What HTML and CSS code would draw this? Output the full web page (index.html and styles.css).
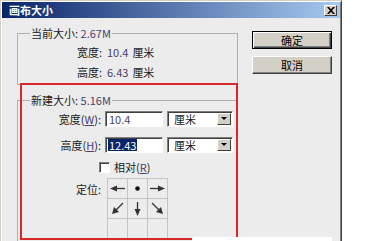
FILE: index.html
```html
<!DOCTYPE html>
<html lang="zh">
<head>
  <meta charset="UTF-8">
  <title>画布大小</title>
  <link rel="stylesheet" href="styles.css">
</head>
<body>
<div class="dialog">
  <div class="titlebar">
    <span class="title">画布大小</span>
    <span class="close">
      <svg width="8" height="7" viewBox="0 0 8 7"><path d="M0 0h2l2 2.2L6 0h2L5 3.5 8 7H6L4 4.8 2 7H0l3-3.5z" fill="#000"/></svg>
    </span>
  </div>
  <div class="content">
    <div class="main">
      <fieldset class="group current">
        <legend>当前大小: <span class="num">2.67M</span></legend>
        <div class="info-row"><span class="lbl">宽度:</span><span class="num">10.4</span><span>厘米</span></div>
        <div class="info-row"><span class="lbl">高度:</span><span class="num">6.43</span><span>厘米</span></div>
      </fieldset>
      <fieldset class="group newsize">
        <legend>新建大小: <span class="num">5.16M</span></legend>
        <div class="form">
          <label class="lbl">宽度(<u>W</u>):</label>
          <div class="field"><span class="num">10.4</span></div>
          <div class="select"><span>厘米</span><span class="drop"></span></div>
          <label class="lbl">高度(<u>H</u>):</label>
          <div class="field"><span class="sel">12.43</span></div>
          <div class="select"><span>厘米</span><span class="drop"></span></div>
        </div>
        <div class="check-row"><span class="box"></span><span>相对(<u>R</u>)</span></div>
        <div class="anchor-row">
          <span class="lbl">定位:</span>
          <div class="anchor">
            <div class="cell"><svg width="19" height="19" viewBox="0 0 19 19"><path d="M9 9.5h8" stroke="#333" stroke-width="1.3"/><path d="M2 9.5l7-3v6z" fill="#333"/></svg></div>
            <div class="cell"><svg width="19" height="19" viewBox="0 0 19 19"><circle cx="9.5" cy="9.5" r="2.3" fill="#111"/></svg></div>
            <div class="cell"><svg width="19" height="19" viewBox="0 0 19 19"><path d="M2 9.5h8" stroke="#333" stroke-width="1.3"/><path d="M17 9.5l-7-3v6z" fill="#333"/></svg></div>
            <div class="cell"><svg width="19" height="19" viewBox="0 0 19 19"><path d="M8 11l7-7" stroke="#333" stroke-width="1.3"/><path d="M4 15l2-7 5 5z" fill="#333"/></svg></div>
            <div class="cell"><svg width="19" height="19" viewBox="0 0 19 19"><path d="M9.5 3v8" stroke="#333" stroke-width="1.3"/><path d="M9.5 17l-3-7h6z" fill="#333"/></svg></div>
            <div class="cell"><svg width="19" height="19" viewBox="0 0 19 19"><path d="M4 4l7 7" stroke="#333" stroke-width="1.3"/><path d="M15 15l-7-2 5-5z" fill="#333"/></svg></div>
            <div class="cell"></div>
            <div class="cell"></div>
            <div class="cell"></div>
          </div>
        </div>
      </fieldset>
    </div>
    <div class="buttons">
      <button class="btn default">确定</button>
      <button class="btn">取消</button>
    </div>
  </div>
  <div class="mark"></div>
  <div class="strip"></div>
</div>
</body>
</html>
```

FILE: styles.css
```css
* { box-sizing: border-box; }
html, body {
  margin: 0;
  padding: 0;
  overflow: hidden;
  background: #fff;
}
body {
  font-family: "Noto Sans CJK SC", "Liberation Sans", sans-serif;
  font-size: 11px;
  line-height: 12px;
  color: #1a1a1a;
}
.dialog {
  position: relative;
  width: 342px;
  height: 244px;
  padding: 1px;
  background: #ececec;
  border: 1px solid;
  border-color: #d4d0c8 #404040 #404040 #d4d0c8;
  box-shadow: inset 1px 1px #fff, inset -1px -1px #808080;
  overflow: hidden;
}
.titlebar {
  display: flex;
  justify-content: space-between;
  align-items: center;
  height: 16px;
  padding: 0 3px 0 7px;
  background: linear-gradient(90deg, #0a246a, #a6caf0);
}
.title {
  color: #fff;
  font-weight: bold;
  font-size: 11px;
}
.close {
  display: flex;
  align-items: center;
  justify-content: center;
  width: 13px;
  height: 11px;
  background: #d4d0c8;
  border: 1px solid;
  border-color: #fff #404040 #404040 #fff;
}
.content {
  display: flex;
  padding: 9px 0 0 15px;
}
.main {
  width: 221px;
}
.group {
  margin: 0;
  padding: 0 0 0 12px;
  border: 1px solid #b0b0b0;
  min-width: 0;
}
.group legend {
  padding: 0 1px;
  line-height: 12px;
}
.num { color: #4a3d6b; }
u { color: #4a3d7a; }
.current {
  height: 58px;
}
.info-row {
  display: flex;
  gap: 4px;
  height: 20px;
  align-items: center;
  padding-left: 47px;
  white-space: nowrap;
}
.info-row:first-of-type { margin-top: 3px; }
.info-row .lbl { flex: none; width: 26px; }
.newsize {
  margin-top: 9px;
  height: 170px;
}
.form {
  display: grid;
  grid-template-columns: 71px 58px 66px;
  column-gap: 4px;
  row-gap: 10px;
  margin-top: 5px;
}
.form .lbl {
  display: flex;
  align-items: center;
  justify-content: flex-end;
  white-space: nowrap;
}
.field, .select {
  display: flex;
  align-items: center;
  height: 16px;
  background: #fff;
  border: 1px solid;
  border-color: #808080 #fff #fff #808080;
  box-shadow: inset 1px 1px #404040;
  padding-left: 3px;
}
.sel {
  background: #0a246a;
  color: #fff;
  padding: 0 1px;
  margin-left: -1px;
}
.select {
  justify-content: space-between;
  padding-left: 6px;
  padding-right: 1px;
}
.drop {
  position: relative;
  width: 14px;
  height: 12px;
  background: #d4d0c8;
  border: 1px solid;
  border-color: #fff #404040 #404040 #fff;
}
.drop::after {
  content: "";
  position: absolute;
  left: 3px;
  top: 3px;
  border-left: 3px solid transparent;
  border-right: 3px solid transparent;
  border-top: 3px solid #000;
}
.check-row {
  display: flex;
  align-items: center;
  gap: 4px;
  margin-top: 8px;
  padding-left: 69px;
}
.box {
  width: 11px;
  height: 11px;
  background: #fff;
  border: 1px solid;
  border-color: #808080 #fff #fff #808080;
  box-shadow: inset 1px 1px #404040;
}
.anchor-row {
  display: flex;
  gap: 6px;
  margin-top: 5px;
}
.anchor-row .lbl {
  width: 71px;
  text-align: right;
  margin-top: 5px;
}
.anchor {
  display: grid;
  grid-template-columns: repeat(3, 19px);
  grid-auto-rows: 19px;
  gap: 1px;
  border: 1px solid #c4c4c4;
  background: #c4c4c4;
}
.cell {
  background: #ececec;
}
.cell svg { display: block; }
.buttons {
  display: flex;
  flex-direction: column;
  gap: 7px;
  margin: 4px 0 0 14px;
}
.btn {
  width: 80px;
  height: 18px;
  padding: 0;
  font: inherit;
  color: #000;
  background: #d4d0c8;
  border: 1px solid;
  border-color: #fff #404040 #404040 #fff;
  box-shadow: inset -1px -1px #808080;
}
.btn.default {
  border: 1px solid #000;
  box-shadow: inset 1px 1px #fff, inset -1px -1px #404040, inset -2px -2px #808080;
}
.mark {
  position: absolute;
  left: 19px;
  top: 82px;
  width: 218px;
  height: 157px;
  border: 2px solid #d62a2a;
}
.strip {
  position: absolute;
  left: 191px;
  top: 236px;
  width: 140px;
  height: 10px;
  background: #fff;
}
```
